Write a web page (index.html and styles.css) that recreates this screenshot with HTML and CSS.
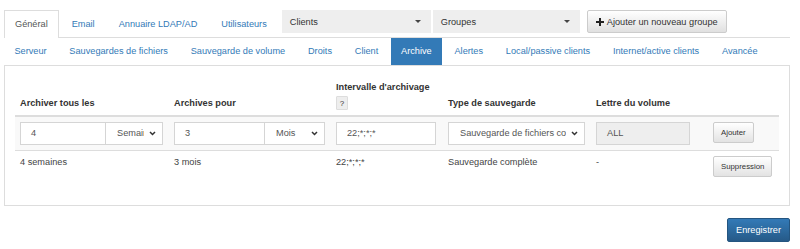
FILE: index.html
```html
<!DOCTYPE html>
<html lang="fr">
<head>
    <meta charset="UTF-8">
    <meta name="viewport" content="width=device-width, initial-scale=1.0">
    <title>Paramètres : Archive</title>
    <link rel="stylesheet" href="styles.css">
</head>
<body>
<div class="page">
    <div class="top-nav">
        <a class="tab active">Général</a>
        <a class="tab">Email</a>
        <a class="tab">Annuaire LDAP/AD</a>
        <a class="tab">Utilisateurs</a>
        <div class="dropdown clients">
            <span>Clients</span>
            <span class="caret"></span>
        </div>
        <div class="dropdown groups">
            <span>Groupes</span>
            <span class="caret"></span>
        </div>
        <button class="btn-add">
            <svg class="plus" width="8" height="8" viewBox="0 0 8 8"><rect x="3" y="0" width="2" height="8"/><rect x="0" y="3" width="8" height="2"/></svg>
            <span>Ajouter un nouveau groupe</span>
        </button>
    </div>

    <div class="sub-nav">
        <a class="pill">Serveur</a>
        <a class="pill">Sauvegardes de fichiers</a>
        <a class="pill">Sauvegarde de volume</a>
        <a class="pill">Droits</a>
        <a class="pill">Client</a>
        <a class="pill active">Archive</a>
        <a class="pill">Alertes</a>
        <a class="pill">Local/passive clients</a>
        <a class="pill">Internet/active clients</a>
        <a class="pill">Avancée</a>
    </div>

    <div class="panel">
        <table class="archive-table">
            <colgroup>
                <col class="c-every">
                <col class="c-keep">
                <col class="c-interval">
                <col class="c-type">
                <col class="c-letter">
                <col class="c-action">
            </colgroup>
            <thead>
                <tr>
                    <th>Archiver tous les</th>
                    <th>Archives pour</th>
                    <th>Intervalle d'archivage<br><span class="help">?</span></th>
                    <th>Type de sauvegarde</th>
                    <th>Lettre du volume</th>
                    <th></th>
                </tr>
            </thead>
            <tbody>
                <tr class="edit-row">
                    <td>
                        <div class="input-group">
                            <div class="field w-every">4</div>
                            <div class="select w-every-unit"><span class="select-text">Semaines</span><svg class="chevron" width="7" height="5" viewBox="0 0 7 5"><path d="M1 1l2.5 2.5L6 1" fill="none" stroke="#333" stroke-width="1.5"/></svg></div>
                        </div>
                    </td>
                    <td>
                        <div class="input-group">
                            <div class="field w-keep">3</div>
                            <div class="select w-keep-unit"><span class="select-text">Mois</span><svg class="chevron" width="7" height="5" viewBox="0 0 7 5"><path d="M1 1l2.5 2.5L6 1" fill="none" stroke="#333" stroke-width="1.5"/></svg></div>
                        </div>
                    </td>
                    <td><div class="field w-interval">22;*;*;*</div></td>
                    <td>
                        <div class="select w-type"><span class="select-text">Sauvegarde de fichiers complète</span><svg class="chevron" width="7" height="5" viewBox="0 0 7 5"><path d="M1 1l2.5 2.5L6 1" fill="none" stroke="#333" stroke-width="1.5"/></svg></div>
                    </td>
                    <td><div class="field disabled w-letter">ALL</div></td>
                    <td><button class="btn-small">Ajouter</button></td>
                </tr>
                <tr>
                    <td>4 semaines</td>
                    <td>3 mois</td>
                    <td>22;*;*;*</td>
                    <td>Sauvegarde complète</td>
                    <td>-</td>
                    <td><button class="btn-small">Suppression</button></td>
                </tr>
            </tbody>
        </table>
    </div>

    <div class="actions">
        <button class="btn-primary">Enregistrer</button>
    </div>
</div>
</body>
</html>
```

FILE: styles.css
```css
/* Global Styles */
body {
    margin: 0;
    background-color: #fff;
    font-family: 'Liberation Sans', Arial, sans-serif;
    font-size: 9.2px;
    color: #333;
}

.page {
    padding: 10px 10px 0 4px;
}

a {
    cursor: pointer;
}

/* Top navigation */
.top-nav {
    display: flex;
    align-items: flex-start;
    height: 27px;
    border-bottom: 1px solid #ddd;
}

.tab {
    height: 27px;
    line-height: 26px;
    padding: 0 10px;
    margin-right: 2px;
    border: 1px solid transparent;
    border-bottom: none;
    color: #337ab7;
    box-sizing: border-box;
}

.tab.active {
    height: 28px;
    margin-bottom: -1px;
    border-color: #ddd;
    background-color: #fff;
    color: #555;
}

.dropdown {
    display: flex;
    align-items: center;
    justify-content: space-between;
    height: 23px;
    padding: 0 10px 0 8px;
    background-color: #eee;
    color: #333;
    box-sizing: border-box;
}

.dropdown.clients {
    width: 149px;
    margin-left: 2px;
}

.dropdown.groups {
    width: 147px;
    margin-left: 2px;
}

.caret {
    width: 0;
    height: 0;
    border-top: 3px solid #444;
    border-left: 3px solid transparent;
    border-right: 3px solid transparent;
}

.btn-add {
    display: flex;
    align-items: center;
    gap: 3px;
    height: 23px;
    margin-left: 7px;
    padding: 0 8px;
    font-family: inherit;
    font-size: 9.2px;
    color: #333;
    white-space: nowrap;
    background: linear-gradient(#fff, #e0e0e0);
    border: 1px solid #ccc;
    border-radius: 2px;
    box-sizing: border-box;
}

.plus {
    fill: #222;
}

/* Sub navigation */
.sub-nav {
    display: flex;
    height: 27px;
}

.pill {
    line-height: 27px;
    padding: 0 10.4px;
    margin-right: 2px;
    color: #337ab7;
}

.pill.active {
    background-color: #337ab7;
    color: #fff;
}

/* Panel */
.panel {
    border: 1px solid #ddd;
    padding: 10px;
}

.archive-table {
    width: 100%;
    table-layout: fixed;
    border-collapse: collapse;
    margin-bottom: 13px;
}

.c-every { width: 154px; }
.c-keep { width: 162px; }
.c-interval { width: 112px; }
.c-type { width: 148px; }
.c-letter { width: 117px; }
.c-action { width: 71px; }

.archive-table th {
    padding: 5px;
    text-align: left;
    vertical-align: bottom;
    font-weight: bold;
    line-height: 13px;
    border-bottom: 2px solid #ddd;
}

.archive-table td {
    padding: 5px;
    vertical-align: top;
    font-weight: normal;
    line-height: 13px;
    color: #444;
    border-top: 1px solid #ddd;
}

.archive-table tbody tr:first-child td {
    border-top: none;
}

.edit-row {
    background-color: #f9f9f9;
}

.help {
    display: inline-block;
    margin-top: 2px;
    width: 12px;
    height: 14px;
    line-height: 14px;
    text-align: center;
    font-size: 8px;
    font-weight: normal;
    color: #333;
    background-color: #eee;
    border: 1px solid #ddd;
    border-radius: 1px;
    box-sizing: border-box;
}

/* Form fields */
.input-group {
    display: flex;
}

.field,
.select {
    height: 23px;
    line-height: 21px;
    border: 1px solid #d5d5d5;
    background-color: #fff;
    color: #555;
    box-sizing: border-box;
}

.field {
    padding: 0 10px;
}

.field.disabled {
    background-color: #eee;
}

.select {
    display: flex;
    align-items: center;
    padding: 0 6px 0 11px;
}

.input-group .select {
    border-left: none;
}

.select-text {
    flex: 1;
    overflow: hidden;
    white-space: nowrap;
}

.chevron {
    flex: none;
    margin-left: 5px;
}

.w-every { width: 86px; }
.w-every-unit { width: 57px; }
.w-keep { width: 91px; }
.w-keep-unit { width: 60px; }
.w-interval { width: 100px; }
.w-type { width: 137px; }
.w-letter { width: 94px; }

.btn-small {
    height: 21px;
    padding: 0 7px;
    font-family: inherit;
    font-size: 7.8px;
    color: #333;
    background: linear-gradient(#fff, #e3e3e3);
    border: 1px solid #ccc;
    border-radius: 2px;
    white-space: nowrap;
}

/* Footer actions */
.actions {
    display: flex;
    justify-content: flex-end;
    margin-top: 12px;
}

.btn-primary {
    height: 24px;
    padding: 0 8px;
    font-family: inherit;
    font-size: 9.2px;
    color: #fff;
    background: linear-gradient(#337ab7, #265a88);
    border: 1px solid #245580;
    border-radius: 2px;
}
```
